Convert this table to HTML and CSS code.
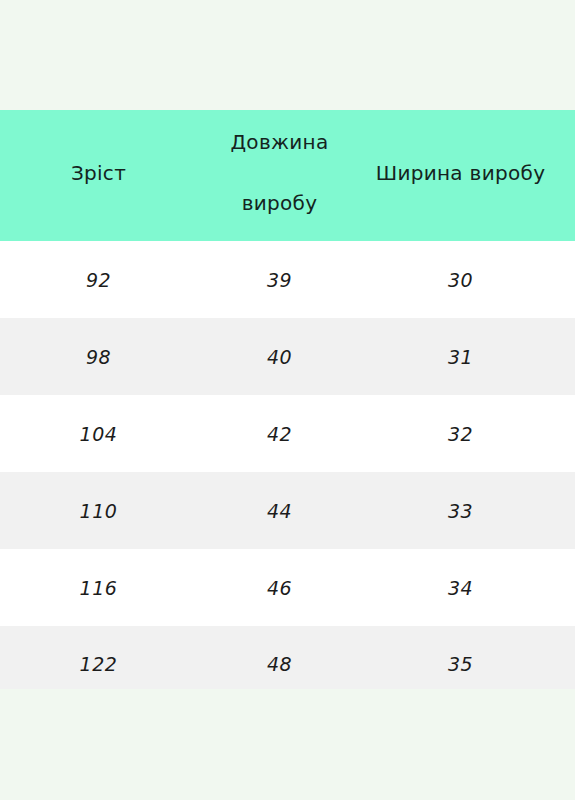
FILE: index.html
```html
<!DOCTYPE html>
<html lang="uk">
<head>
<meta charset="utf-8">
<link rel="stylesheet" href="styles.css">
</head>
<body>
<div class="page">
  <div class="table">
    <div class="row head">
      <div class="cell">Зріст</div>
      <div class="cell stack"><span>Довжина</span><span>виробу</span></div>
      <div class="cell">Ширина виробу</div>
    </div>
    <div class="row"><div class="cell num">92</div><div class="cell num">39</div><div class="cell num">30</div></div>
    <div class="row alt"><div class="cell num">98</div><div class="cell num">40</div><div class="cell num">31</div></div>
    <div class="row"><div class="cell num">104</div><div class="cell num">42</div><div class="cell num">32</div></div>
    <div class="row alt"><div class="cell num">110</div><div class="cell num">44</div><div class="cell num">33</div></div>
    <div class="row"><div class="cell num">116</div><div class="cell num">46</div><div class="cell num">34</div></div>
    <div class="row alt last"><div class="cell num">122</div><div class="cell num">48</div><div class="cell num">35</div></div>
  </div>
</div>
</body>
</html>
```

FILE: styles.css
```css
html, body {
  margin: 0;
  padding: 0;
  background: #f1f8f0;
}
.page {
  width: 575px;
  height: 800px;
  padding-top: 110px;
  box-sizing: border-box;
  font-family: "DejaVu Sans", sans-serif;
  color: #1c1c1c;
}
.row {
  display: grid;
  grid-template-columns: 181px 181px 181px;
  padding-left: 8px;
  height: 77px;
  background: #ffffff;
  align-items: center;
}
.row.alt { background: #f1f1f1; }
.row.last {
  height: 63px;
  overflow: hidden;
  align-items: start;
}
.row.last .cell {
  line-height: 77px;
}
.row.head {
  height: 131px;
  box-sizing: border-box;
  padding-bottom: 6px;
  background: #80f9d0;
  color: #14241e;
}
.cell {
  text-align: center;
  font-size: 20px;
  letter-spacing: 0.3px;
  white-space: nowrap;
}
.stack {
  display: flex;
  flex-direction: column;
  gap: 37px;
  align-items: center;
}
.num {
  font-style: italic;
  font-size: 19px;
  letter-spacing: 0.5px;
}
```
